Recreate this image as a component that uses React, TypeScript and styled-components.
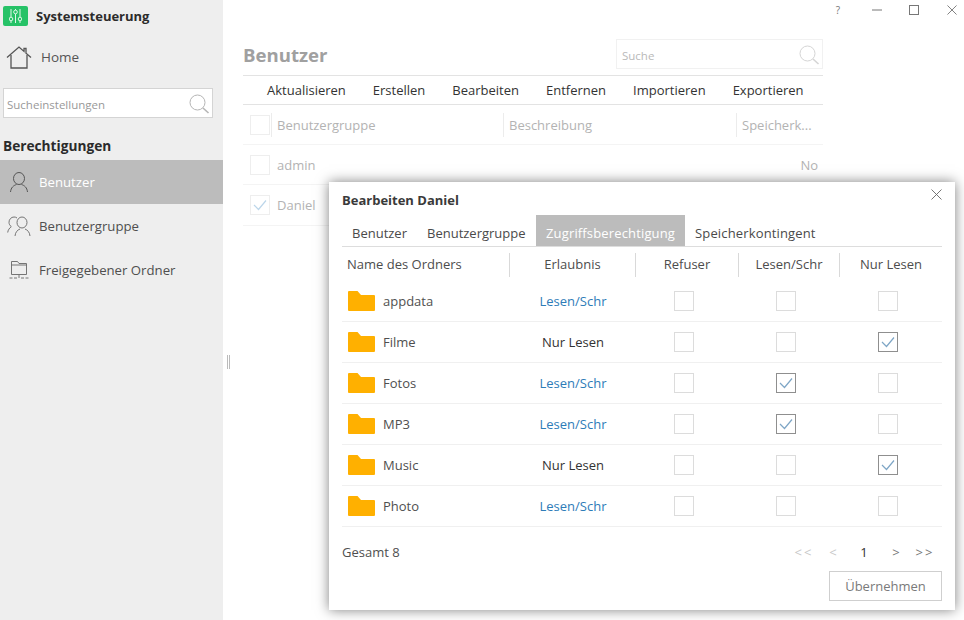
import React from 'react';
import styled, { createGlobalStyle } from 'styled-components';

const Global = createGlobalStyle`
  html, body { margin: 0; padding: 0; width: 964px; height: 620px; overflow: hidden; background: #fff; }
  body { font-family: "Open Sans", "Noto Sans", sans-serif; font-size: 13px; color: #444; }
  * { box-sizing: border-box; }
`;

const Page = styled.div`
  position: relative;
  width: 964px;
  height: 620px;
  display: flex;
  overflow: hidden;
`;

const Sidebar = styled.aside`
  width: 223px;
  height: 620px;
  flex: none;
  background: #eeeeee;
  display: flex;
  flex-direction: column;
`;

const Brand = styled.div`
  height: 33px;
  padding: 6px 0 0 3px;
  display: flex;
  align-items: flex-start;
  gap: 8px;
  font-weight: 700;
  font-size: 13px;
  line-height: 20px;
  color: #2b2b2b;
`;

const BrandIcon = styled.span`
  width: 25px;
  height: 20px;
  border-radius: 2px;
  background: #26c267;
  display: flex;
  align-items: center;
  justify-content: center;
`;

const HomeRow = styled.div`
  height: 48px;
  padding-left: 6px;
  display: flex;
  align-items: center;
  gap: 9px;
  font-size: 13.5px;
  color: #555;
`;

const SideSearch = styled.div`
  margin: 7px 10px 0 3px;
  height: 30px;
  background: #fff;
  border: 1px solid #d4d4d4;
  display: flex;
  align-items: center;
  justify-content: space-between;
  padding: 2px 2px 0 3px;
  font-size: 11.5px;
  color: #999;
`;

const SectionTitle = styled.div`
  margin: 19px 0 3px 3px;
  height: 20px;
  line-height: 18px;
  font-weight: 700;
  font-size: 13.7px;
  color: #2b2b2b;
`;

const NavItem = styled.div<{ $active?: boolean }>`
  height: 44px;
  padding-left: 7px;
  display: flex;
  align-items: center;
  gap: 8px;
  font-size: 13.2px;
  background: ${p => (p.$active ? '#bcbcbc' : 'transparent')};
  color: ${p => (p.$active ? '#ffffff' : '#4f4f4f')};
`;

const NavIconSlot = styled.span`
  width: 24px;
  height: 24px;
  display: flex;
  align-items: center;
  justify-content: center;
`;

const Splitter = styled.div`
  width: 20px;
  flex: none;
  display: flex;
  align-items: center;
  justify-content: center;
  padding-right: 10px;
  padding-top: 104px;
`;

const SplitterGrip = styled.span`
  width: 3px;
  height: 14px;
  border-left: 1px solid #bbb;
  border-right: 1px solid #bbb;
`;

const Main = styled.main`
  width: 580px;
  flex: none;
  display: flex;
  flex-direction: column;
  padding-top: 39px;
`;

const TitleRow = styled.div`
  height: 37px;
  border-bottom: 1px solid #e3e3e3;
  display: flex;
  justify-content: space-between;
  align-items: flex-start;
`;

const PageTitle = styled.h1`
  margin: 0;
  font-size: 18.6px;
  line-height: 32px;
  font-weight: 700;
  color: #a0a0a0;
`;

const TopSearch = styled.div`
  width: 207px;
  height: 30px;
  border: 1px solid #f1f1f1;
  display: flex;
  align-items: center;
  justify-content: space-between;
  padding: 2px 2px 0 5px;
  font-size: 11.5px;
  color: #b9b9b9;
`;

const Toolbar = styled.div`
  height: 29px;
  border-bottom: 1px solid #e3e3e3;
  padding-left: 24px;
  display: flex;
  align-items: center;
  gap: 27px;
  font-size: 13px;
  color: #333;
`;

const UserRow = styled.div<{ $line?: boolean }>`
  height: ${p => (p.$line ? 41 : 40)}px;
  display: flex;
  align-items: center;
  gap: 1px;
  padding-left: 7px;
  color: #b3b3b3;
  font-size: 13px;
  border-bottom: 1px solid #f4f4f4;
`;

const HeaderCell = styled.span<{ $w: number }>`
  width: ${p => p.$w}px;
  flex: none;
  height: 24px;
  line-height: 24px;
  padding-left: 5px;
  white-space: nowrap;
  border-left: 1px solid #ececec;
`;

const UserName = styled.span`
  margin-left: 6px;
  flex: 1;
`;

const EndValue = styled.span`
  padding-right: 5px;
`;

const Box = styled.span<{ $state?: 'on' | 'soft' }>`
  width: 20px;
  height: 20px;
  flex: none;
  display: flex;
  align-items: center;
  justify-content: center;
  background: #fff;
  border: ${p => (p.$state === 'on' ? '1.5px solid #8f8f8f' : p.$state === 'soft' ? '1.5px solid #eeeeee' : '1.5px solid #dcdcdc')};
`;

const Dialog = styled.section`
  position: absolute;
  left: 329px;
  top: 182px;
  width: 626px;
  height: 428px;
  background: #fff;
  box-shadow: 0 0 12px rgba(0, 0, 0, 0.5);
  padding: 0 13px 0 13px;
  display: flex;
  flex-direction: column;
`;

const DialogTitle = styled.h2`
  margin: 0;
  height: 33px;
  padding-top: 9px;
  font-size: 13px;
  line-height: 19px;
  font-weight: 700;
  color: #3a3a3a;
`;

const DialogClose = styled.span`
  position: absolute;
  right: 13px;
  top: 7px;
  width: 11px;
  height: 11px;
  display: flex;
`;

const Tabs = styled.div`
  height: 32px;
  border-bottom: 1px solid #dddddd;
  display: flex;
  flex: none;
`;

const Tab = styled.div<{ $active?: boolean; $w: number; $spread?: boolean }>`
  width: ${p => p.$w}px;
  flex: none;
  height: 31px;
  line-height: 36px;
  padding-left: 10px;
  white-space: nowrap;
  font-size: 13px;
  letter-spacing: ${p => (p.$spread ? '0.15px' : '0')};
  background: ${p => (p.$active ? '#bcbcbc' : 'transparent')};
  color: ${p => (p.$active ? '#fff' : '#4a4a4a')};
`;

const COLS = '168px 126px 103px 101px 102px';

const TableHead = styled.div`
  display: grid;
  grid-template-columns: ${COLS};
  height: 34px;
  align-items: center;
  padding-top: 1px;
  color: #4d4d4d;
`;

const HeadCell = styled.div<{ $first?: boolean }>`
  height: 24px;
  line-height: 23px;
  text-align: ${p => (p.$first ? 'left' : 'center')};
  padding-left: ${p => (p.$first ? '5px' : '0')};
  border-right: 1px solid #d9d9d9;
  &:last-child { border-right: none; }
`;

const Row = styled.div`
  display: grid;
  grid-template-columns: ${COLS};
  height: 41px;
  align-items: center;
  border-bottom: 1px solid #f0f0f0;
`;

const NameCell = styled.div`
  display: flex;
  align-items: center;
  padding-left: 6px;
  gap: 8px;
  color: #4f4f4f;
`;

const Permission = styled.div<{ $rw: boolean }>`
  text-align: center;
  color: ${p => (p.$rw ? '#2e7cb8' : '#333')};
`;

const CheckCell = styled.div`
  display: flex;
  justify-content: center;
  padding-right: 7px;
`;

const Footer = styled.div`
  height: 44px;
  display: flex;
  align-items: center;
  justify-content: space-between;
  color: #4f4f4f;
  padding-top: 6px;
`;

const Pager = styled.div`
  display: flex;
  align-items: center;
  font-size: 13px;
`;

const PageLink = styled.span<{ $tone: 'off' | 'cur' | 'on'; $w: number }>`
  width: ${p => p.$w}px;
  text-align: center;
  letter-spacing: ${p => (p.$w > 30 ? '2px' : '0')};
  color: ${p => (p.$tone === 'off' ? '#c8c8c8' : p.$tone === 'cur' ? '#333' : '#777')};
`;

const Actions = styled.div`
  display: flex;
  justify-content: flex-end;
`;

const ApplyButton = styled.button`
  width: 113px;
  height: 30px;
  background: #fff;
  border: 1px solid #cfcfcf;
  font: inherit;
  font-size: 13px;
  color: #7a7a7a;
  padding: 0;
`;

const WindowControls = styled.div`
  position: absolute;
  top: 4px;
  right: 0;
  display: flex;
  align-items: center;
  height: 12px;
`;

const WindowBtn = styled.span<{ $w: number }>`
  width: ${p => p.$w}px;
  display: flex;
  justify-content: center;
  align-items: center;
  font-size: 10px;
  line-height: 12px;
  color: #777;
`;

const Search = ({ size = 22, color = '#b5b5b5' }: { size?: number; color?: string }) => (
  <svg width={size} height={size} viewBox="0 0 22 22" fill="none">
    <circle cx="9.5" cy="9.5" r="7.5" stroke={color} strokeWidth="1" />
    <path d="M15 15l5.5 5" stroke={color} strokeWidth="1.6" />
  </svg>
);

const UserIcon = ({ color = '#555' }: { color?: string }) => (
  <svg width="20" height="22" viewBox="0 0 20 22" fill="none" stroke={color} strokeWidth="1">
    <ellipse cx="10" cy="7.5" rx="5.5" ry="6" />
    <path d="M1.5 21c.5-4.500 3-6.500 6-7.500M18.500 21c-.5-4.500-3-6.500-6-7.500" />
  </svg>
);

const GroupIcon = () => (
  <svg width="24" height="21" viewBox="0 0 24 21" fill="none" stroke="#666" strokeWidth="0.9">
    <ellipse cx="15" cy="6.500" rx="5" ry="5.500" />
    <path d="M8 20c.4-4 2.500-6 5-7M23 20c-.4-4-2.500-6-5-7" />
    <path d="M10 2c-1-.8-2-1-3-1-2.800 0-5 2.400-5 5.300 0 1.700.8 3.300 2.300 4.300C2.500 12 1 14 .7 16.500" />
  </svg>
);

const ShareIcon = () => (
  <svg width="20" height="20" viewBox="0 0 20 20" fill="none" stroke="#666" strokeWidth="0.9">
    <path d="M2.500 14.500V1.500h6l1.500 2h7.500v11z" />
    <path d="M2.500 5h15" />
    <path d="M10 15v3M.5 18h3M5 18h3M12 18h3M16.500 18h3" />
  </svg>
);

const Check = ({ color = '#7ea6c6' }: { color?: string }) => (
  <svg width="14" height="12" viewBox="0 0 14 12" fill="none">
    <path d="M1 6l4.500 4.500L13 1.500" stroke={color} strokeWidth="1.2" />
  </svg>
);

const Folder = () => (
  <svg width="27" height="20" viewBox="0 0 27 20">
    <path d="M1 0h8.500l3.500 4h13a1 1 0 0 1 1 1v14a1 1 0 0 1-1 1H1a1 1 0 0 1-1-1V1a1 1 0 0 1 1-1z" fill="#ffb000" />
  </svg>
);

const Cross = ({ size = 11, color = '#666' }: { size?: number; color?: string }) => (
  <svg width={size} height={size} viewBox="0 0 11 11" fill="none">
    <path d="M.5.500l10 10M10.500.500l-10 10" stroke={color} strokeWidth="0.9" />
  </svg>
);

const rows = [
  { name: 'appdata', rw: true, sel: -1 },
  { name: 'Filme', rw: false, sel: 2 },
  { name: 'Fotos', rw: true, sel: 1 },
  { name: 'MP3', rw: true, sel: 1 },
  { name: 'Music', rw: false, sel: 2 },
  { name: 'Photo', rw: true, sel: -1 },
];

const actions = ['Aktualisieren', 'Erstellen', 'Bearbeiten', 'Entfernen', 'Importieren', 'Exportieren'];

export default function App() {
  return (
    <Page>
      <Global />
      <Sidebar>
        <Brand>
          <BrandIcon>
            <svg width="13" height="14" viewBox="0 0 13 14" fill="none" stroke="#dff7e8" strokeWidth="1">
              <path d="M2 0v8M2 12v2M6.500 0v1M6.500 5v9M11 0v8M11 12v2" />
              <circle cx="2" cy="10" r="1.800" />
              <circle cx="6.500" cy="3" r="1.800" />
              <circle cx="11" cy="10" r="1.800" />
            </svg>
          </BrandIcon>
          Systemsteuerung
        </Brand>
        <HomeRow>
          <svg width="26" height="23" viewBox="0 0 26 23" fill="none" stroke="#555" strokeWidth="1.300">
            <path d="M1 11.500L13 1l5 4.400V2.500h2v4.700l5 4.300" />
            <path d="M5 9v13h16V9" />
          </svg>
          Home
        </HomeRow>
        <SideSearch>
          Sucheinstellungen
          <Search />
        </SideSearch>
        <SectionTitle>Berechtigungen</SectionTitle>
        <NavItem $active>
          <NavIconSlot><UserIcon /></NavIconSlot>
          Benutzer
        </NavItem>
        <NavItem>
          <NavIconSlot><GroupIcon /></NavIconSlot>
          Benutzergruppe
        </NavItem>
        <NavItem>
          <NavIconSlot><ShareIcon /></NavIconSlot>
          Freigegebener Ordner
        </NavItem>
      </Sidebar>

      <Splitter><SplitterGrip /></Splitter>

      <Main>
        <TitleRow>
          <PageTitle>Benutzer</PageTitle>
          <TopSearch>
            Suche
            <Search color="#d5d5d5" />
          </TopSearch>
        </TitleRow>
        <Toolbar>
          {actions.map(a => <span key={a}>{a}</span>)}
        </Toolbar>
        <UserRow>
          <Box $state="soft" />
          <HeaderCell $w={231}>Benutzergruppe</HeaderCell>
          <HeaderCell $w={232}>Beschreibung</HeaderCell>
          <HeaderCell $w={80}>Speicherk...</HeaderCell>
        </UserRow>
        <UserRow>
          <Box $state="soft" />
          <UserName>admin</UserName>
          <EndValue>No</EndValue>
        </UserRow>
        <UserRow $line>
          <Box $state="soft"><Check color="#bcd6ea" /></Box>
          <UserName>Daniel</UserName>
        </UserRow>
      </Main>

      <WindowControls>
        <WindowBtn $w={56}>?</WindowBtn>
        <WindowBtn $w={22}>
          <svg width="10" height="2" viewBox="0 0 10 2"><path d="M0 1h10" stroke="#777" /></svg>
        </WindowBtn>
        <WindowBtn $w={52}>
          <svg width="10" height="10" viewBox="0 0 10 10" fill="none"><rect x=".5" y=".5" width="9" height="9" stroke="#777" /></svg>
        </WindowBtn>
        <WindowBtn $w={24}><Cross size={10} /></WindowBtn>
      </WindowControls>

      <Dialog>
        <DialogTitle>Bearbeiten Daniel</DialogTitle>
        <DialogClose><Cross /></DialogClose>
        <Tabs>
          <Tab $w={75}>Benutzer</Tab>
          <Tab $w={119}>Benutzergruppe</Tab>
          <Tab $w={149} $active $spread>Zugriffsberechtigung</Tab>
          <Tab $w={141} $spread>Speicherkontingent</Tab>
        </Tabs>
        <TableHead>
          <HeadCell $first>Name des Ordners</HeadCell>
          <HeadCell>Erlaubnis</HeadCell>
          <HeadCell>Refuser</HeadCell>
          <HeadCell>Lesen/Schr</HeadCell>
          <HeadCell>Nur Lesen</HeadCell>
        </TableHead>
        {rows.map(r => (
          <Row key={r.name}>
            <NameCell><Folder />{r.name}</NameCell>
            <Permission $rw={r.rw}>{r.rw ? 'Lesen/Schr' : 'Nur Lesen'}</Permission>
            {[0, 1, 2].map(i => {
              const on = i === r.sel;
              return (
                <CheckCell key={i}>
                  <Box $state={on ? 'on' : undefined}>{on && <Check />}</Box>
                </CheckCell>
              );
            })}
          </Row>
        ))}
        <Footer>
          <span>Gesamt 8</span>
          <Pager>
            <PageLink $tone="off" $w={32}>&lt;&lt;</PageLink>
            <PageLink $tone="off" $w={26}>&lt;</PageLink>
            <PageLink $tone="cur" $w={38}>1</PageLink>
            <PageLink $tone="on" $w={24}>&gt;</PageLink>
            <PageLink $tone="on" $w={34}>&gt;&gt;</PageLink>
          </Pager>
        </Footer>
        <Actions>
          <ApplyButton>Übernehmen</ApplyButton>
        </Actions>
      </Dialog>
    </Page>
  );
}
